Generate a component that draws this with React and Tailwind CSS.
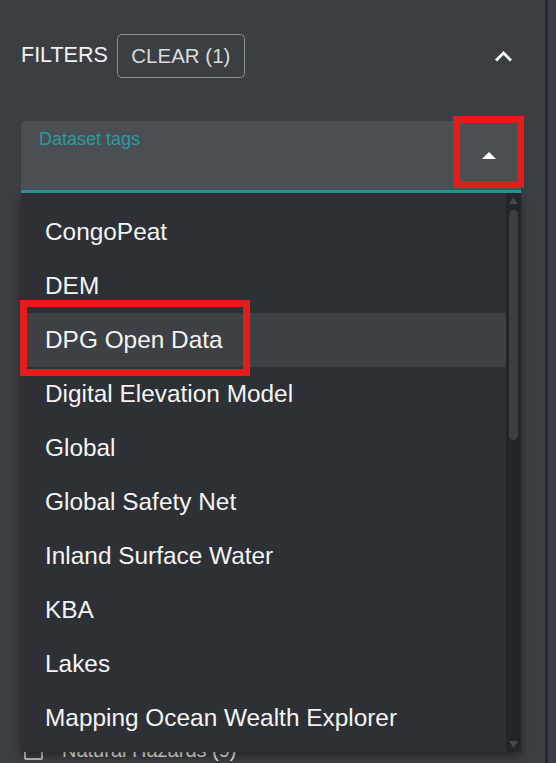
import React from "react";

const tags = [
  "CongoPeat",
  "DEM",
  "DPG Open Data",
  "Digital Elevation Model",
  "Global",
  "Global Safety Net",
  "Inland Surface Water",
  "KBA",
  "Lakes",
  "Mapping Ocean Wealth Explorer",
];

// categorias debajo del menu (quedan tapadas)
const categories = [
  "Agriculture (4)",
  "Biodiversity (12)",
  "Climate (7)",
  "Coastal (3)",
  "Ecosystems (8)",
  "Energy (2)",
  "Forests (6)",
  "Land Use (5)",
  "Marine (4)",
  "Natural Hazards (9)",
];

export default function App() {
  const selected = "DPG Open Data";

  return (
    <div
      className="relative flex w-[556px] h-[763px] overflow-hidden bg-[#3b3e42]"
      style={{ fontFamily: '"Liberation Sans", Arial, sans-serif' }}
    >
      <div className="flex-1 flex flex-col pl-[21px] pr-[24px]">
        {/* Cabecera */}
        <div className="flex items-center h-[44px] mt-[34px]">
          <span className="text-[21.5px] text-[#f2f2f2] leading-none">FILTERS</span>
          <button className="ml-[9px] h-[44px] w-[128px] border border-[#8e9194] rounded-[5px] text-[20.5px] text-[#dcdcdc] leading-none">
            CLEAR (1)
          </button>
          <div className="flex-1" />
          <svg width="19" height="12" viewBox="0 0 19 12" className="mr-[8px]">
            <polyline
              points="2,10.5 9.5,3 17,10.5"
              fill="none"
              stroke="#ffffff"
              strokeWidth="2.8"
            />
          </svg>
        </div>

        {/* Select */}
        <div className="relative mt-[43px]">
          <div className="flex h-[72px] bg-[#4b4f53] rounded-t-[5px] border-b-[3px] border-[#26989b]">
            <div className="flex-1 pl-[18px] pt-[8px] text-[18px] leading-[21px] text-[#2a9a9d]">
              Dataset tags
            </div>
            <div className="self-center mr-[25px] mb-[1px]">
              <svg width="14" height="7" viewBox="0 0 14 7">
                <polygon points="0,7 7,0 14,7" fill="#ffffff" />
              </svg>
            </div>
          </div>

          {/* Menu desplegado */}
          <div className="absolute left-0 right-0 top-full z-10 flex h-[559px] bg-[#2d3035] rounded-b-[4px] shadow-[0_4px_8px_rgba(0,0,0,0.4)] overflow-hidden">
            <ul className="flex-1 pt-[12px]">
              {tags.map((t) => (
                <li
                  key={t}
                  className={
                    "flex items-center h-[54px] pl-[24px] text-[24.4px] text-[#f4f4f4] " +
                    (t === selected ? "bg-[#3d4045]" : "")
                  }
                >
                  {t}
                </li>
              ))}
            </ul>
            <div className="w-[15px] bg-[#232629] flex flex-col items-center pt-[4px] pb-[4px]">
              <svg width="9" height="7" viewBox="0 0 9 7">
                <polygon points="0,7 4.5,0 9,7" fill="#45494e" />
              </svg>
              <div className="w-[9px] h-[230px] mt-[6px] rounded-full bg-[#3b3f45]" />
              <div className="flex-1" />
              <svg width="9" height="7" viewBox="0 0 9 7">
                <polygon points="0,0 4.5,7 9,0" fill="#45494e" />
              </svg>
            </div>
          </div>
        </div>

        {/* Lista de categorias */}
        <div className="flex flex-col pt-[44px]">
          {categories.map((c) => (
            <label key={c} className="flex items-center h-[54px] pl-[3px] gap-[19px] shrink-0">
              <span className="w-[19px] h-[19px] border-2 border-[#b7b9bb] rounded-[2px]" />
              <span className="text-[20px] text-[#e6e6e6]">{c}</span>
            </label>
          ))}
        </div>
      </div>

      <div className="w-[3px] bg-[#24272b]" />
      <div className="w-[8px] bg-[#393d44]" />

      {/* Marcas rojas */}
      <div className="absolute left-[453px] top-[116px] w-[71px] h-[72px] border-[7px] border-[#e41c1c] z-20" />
      <div className="absolute left-[20px] top-[300px] w-[230px] h-[76px] border-[7px] border-[#e41c1c] z-20" />
    </div>
  );
}
